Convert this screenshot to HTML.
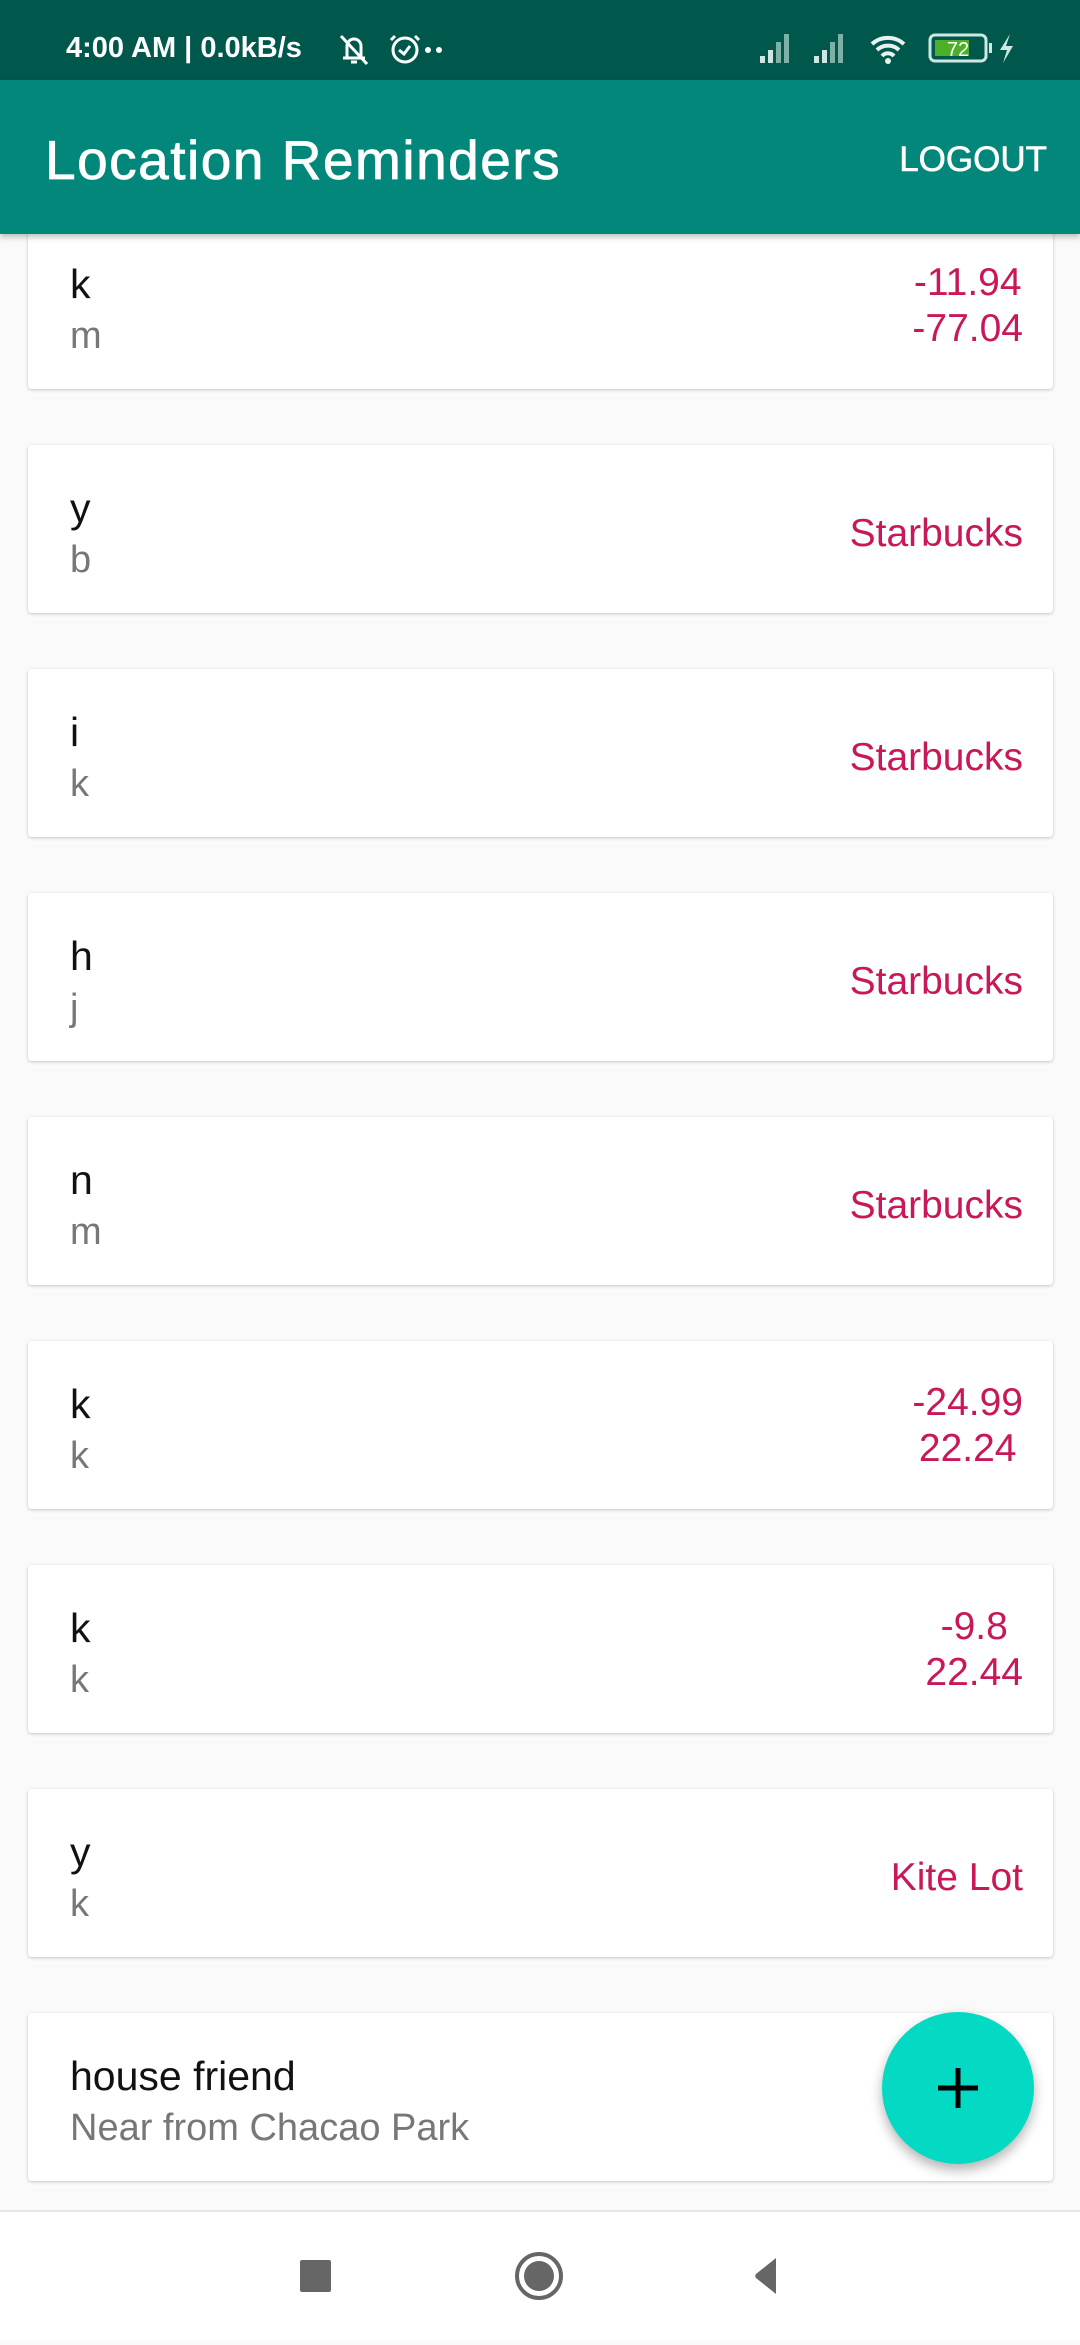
<!DOCTYPE html>
<html><head><meta charset="utf-8"><style>
*{margin:0;padding:0;box-sizing:border-box}
body{width:1080px;height:2340px;background:#fafafa;position:relative;overflow:hidden;font-family:"Liberation Sans",sans-serif}
.sb{position:absolute;top:0;left:0;width:1080px;height:80px;background:#00584c;color:#fff}
.ab{position:absolute;top:80px;left:0;width:1080px;height:154px;background:#02877a;box-shadow:0 3px 6px rgba(0,0,0,.25);z-index:5}
.ab .t{position:absolute;left:45px;top:48px;font-size:55px;color:#fff;letter-spacing:1.5px;-webkit-text-stroke:0.8px #fff}
.ab .l{position:absolute;right:33px;top:60px;font-size:35px;color:#fff;-webkit-text-stroke:0.6px #fff}
.card{position:absolute;left:28px;width:1025px;height:168px;background:#fff;border-radius:4px;box-shadow:0 1px 3px rgba(0,0,0,.22)}
.card .a{position:absolute;left:42px;top:40px;font-size:41px;color:#111}
.card .b{position:absolute;left:42px;top:94px;font-size:38px;color:#777}
.card .r{position:absolute;right:30px;top:66px;font-size:39px;color:#c8185a;text-align:center;line-height:46px}
.card .r2{top:39px}
.nav{position:absolute;top:2210px;left:0;width:1080px;height:130px;background:#fff;border-top:2px solid #e6e6e6}
.fab{position:absolute;left:882px;top:2012px;width:152px;height:152px;border-radius:50%;background:#04d9c4;box-shadow:0 6px 12px rgba(0,0,0,.3);z-index:6}
</style></head><body>
<div class="sb">
<div style="position:absolute;left:66px;top:32px;font-size:29px;font-weight:bold">4:00 AM | 0.0kB/s</div>
<svg style="position:absolute;left:335px;top:30px" width="120" height="40" viewBox="0 0 120 40" fill="none" stroke="#fff" stroke-width="3"><path d="M8 28h22M12 28V16a7 7 0 0 1 14 0v12M16 32h6M6 6l26 28"/><circle cx="70" cy="20" r="12"/><path d="M64 20l5 4 6-8M60 6l-4 4M80 6l4 4"/><circle cx="93" cy="20" r="1.5" fill="#fff"/><circle cx="104" cy="20" r="1.5" fill="#fff"/></svg>
<svg style="position:absolute;left:760px;top:30px" width="270" height="36" viewBox="0 0 270 36"><g fill="#cfe6e1"><rect x="0" y="26" width="5" height="7"/><rect x="8" y="20" width="5" height="13"/></g><g fill="#7fb0a6"><rect x="16" y="12" width="5" height="21"/><rect x="24" y="4" width="5" height="29"/></g><g fill="#cfe6e1"><rect x="54" y="26" width="5" height="7"/><rect x="62" y="20" width="5" height="13"/></g><g fill="#7fb0a6"><rect x="70" y="12" width="5" height="21"/><rect x="78" y="4" width="5" height="29"/></g><g fill="none" stroke="#e8f3f0" stroke-width="4"><path d="M112 14a24 24 0 0 1 32 0M117 20a16 16 0 0 1 22 0M122 26a8 8 0 0 1 12 0"/></g><circle cx="128" cy="31" r="3" fill="#e8f3f0"/><rect x="170" y="5" width="56" height="26" rx="5" fill="none" stroke="#cfe6e1" stroke-width="3"/><rect x="175" y="10" width="34" height="16" fill="#4caf2a"/><text x="198" y="26" font-size="20" fill="#fff" text-anchor="middle" font-family="Liberation Sans">72</text><rect x="229" y="13" width="3" height="10" fill="#cfe6e1"/><path d="M250 4l-10 16h7l-4 13 10-17h-7z" fill="#cfe6e1"/></svg>
</div>
<div class="ab"><div class="t">Location Reminders</div><div class="l">LOGOUT</div></div>

<div class="card" style="top:221px"><div class="a">k</div><div class="b">m</div><div class="r r2">-11.94<br>-77.04</div></div>
<div class="card" style="top:445px"><div class="a">y</div><div class="b">b</div><div class="r">Starbucks</div></div>
<div class="card" style="top:669px"><div class="a">i</div><div class="b">k</div><div class="r">Starbucks</div></div>
<div class="card" style="top:893px"><div class="a">h</div><div class="b">j</div><div class="r">Starbucks</div></div>
<div class="card" style="top:1117px"><div class="a">n</div><div class="b">m</div><div class="r">Starbucks</div></div>
<div class="card" style="top:1341px"><div class="a">k</div><div class="b">k</div><div class="r r2">-24.99<br>22.24</div></div>
<div class="card" style="top:1565px"><div class="a">k</div><div class="b">k</div><div class="r r2">-9.8<br>22.44</div></div>
<div class="card" style="top:1789px"><div class="a">y</div><div class="b">k</div><div class="r">Kite Lot</div></div>
<div class="card" style="top:2013px"><div class="a">house friend</div><div class="b">Near from Chacao Park</div></div>

<div class="fab"><svg width="152" height="152" viewBox="0 0 152 152"><path d="M76 56v40M56 76h40" stroke="#000" stroke-width="5"/></svg></div>
<div class="nav">
<svg width="1080" height="128" viewBox="0 0 1080 128"><rect x="300" y="48" width="31" height="32" rx="2" fill="#666"/><circle cx="539" cy="64" r="22" fill="none" stroke="#666" stroke-width="4"/><circle cx="539" cy="64" r="15" fill="#666"/><path d="M776 46v36l-20-16a3 3 0 0 1 0-4z" fill="#666"/></svg>
</div>
</body></html>
